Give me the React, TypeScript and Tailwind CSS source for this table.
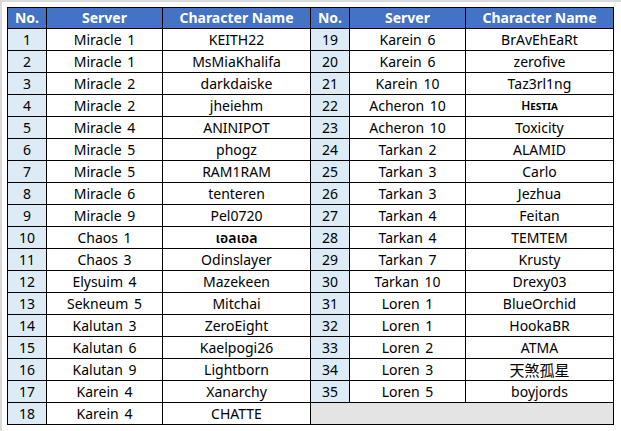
import React from "react";

const left: [string, string, React.ReactNode][] = [
  ["1", "Miracle 1", "KEITH22"],
  ["2", "Miracle 1", "MsMiaKhalifa"],
  ["3", "Miracle 2", "darkdaiske"],
  ["4", "Miracle 2", "jheiehm"],
  ["5", "Miracle 4", "ANINIPOT"],
  ["6", "Miracle 5", "phogz"],
  ["7", "Miracle 5", "RAM1RAM"],
  ["8", "Miracle 6", "tenteren"],
  ["9", "Miracle 9", "Pel0720"],
  ["10", "Chaos 1", <span className="font-semibold">เอลเอล</span>],
  ["11", "Chaos 3", "Odinslayer"],
  ["12", "Elysuim 4", "Mazekeen"],
  ["13", "Sekneum 5", "Mitchai"],
  ["14", "Kalutan 3", "ZeroEight"],
  ["15", "Kalutan 6", "Kaelpogi26"],
  ["16", "Kalutan 9", "Lightborn"],
  ["17", "Karein 4", "Xanarchy"],
  ["18", "Karein 4", "CHATTE"],
];

const right: [string, string, React.ReactNode][] = [
  ["19", "Karein 6", "BrAvEhEaRt"],
  ["20", "Karein 6", "zerofive"],
  ["21", "Karein 10", "Taz3rl1ng"],
  ["22", "Acheron 10", <span className="text-[12px] font-semibold [font-variant:small-caps]">Hestia</span>],
  ["23", "Acheron 10", "Toxicity"],
  ["24", "Tarkan 2", "ALAMID"],
  ["25", "Tarkan 3", "Carlo"],
  ["26", "Tarkan 3", "Jezhua"],
  ["27", "Tarkan 4", "Feitan"],
  ["28", "Tarkan 4", "TEMTEM"],
  ["29", "Tarkan 7", "Krusty"],
  ["30", "Tarkan 10", "Drexy03"],
  ["31", "Loren 1", "BlueOrchid"],
  ["32", "Loren 1", "HookaBR"],
  ["33", "Loren 2", "ATMA"],
  ["34", "Loren 3", <span className="text-[15px]">天煞孤星</span>],
  ["35", "Loren 5", "boyjords"],
];

const Head = ({ children }: { children: React.ReactNode }) => (
  <div className="bg-[#4472c4] text-white font-bold flex items-center justify-center">{children}</div>
);

const No = ({ children }: { children: React.ReactNode }) => (
  <div className="bg-[#ddebf7] flex items-center justify-center pt-px">{children}</div>
);

const Cell = ({ children, server }: { children: React.ReactNode; server?: boolean }) => (
  <div
    className={
      server
        ? "bg-white flex items-center justify-center whitespace-pre pt-px [word-spacing:2px]"
        : "bg-white flex items-center justify-center whitespace-pre pt-px"
    }
  >
    {children}
  </div>
);

export default function App() {
  const rows: React.ReactNode[] = [];
  for (let i = 0; i < 18; i++) {
    const l = left[i];
    rows.push(
      <React.Fragment key={"l" + i}>
        <No>{l[0]}</No>
        <Cell server>{l[1]}</Cell>
        <Cell>{l[2]}</Cell>
      </React.Fragment>
    );
    const r = right[i];
    if (r) {
      rows.push(
        <React.Fragment key={"r" + i}>
          <No>{r[0]}</No>
          <Cell server>{r[1]}</Cell>
          <Cell>{r[2]}</Cell>
        </React.Fragment>
      );
    } else {
      rows.push(<div key="empty" className="col-span-3 bg-[#e4e4e4]" />);
    }
  }
  return (
    <div className="w-[621px] h-[431px] bg-white border-t-2 border-l-2 border-[#d9d9d9] pt-[5px] pl-[5px]">
      <div
        className="grid w-[607px] gap-px bg-black p-px grid-cols-[38px_115px_147px_38px_115px_147px] grid-rows-[20px_repeat(18,21px)] text-[14px] leading-none text-black"
        style={{ fontFamily: '"Noto Sans", "Noto Sans Thai", "Noto Sans CJK KR", sans-serif' }}
      >
        <Head>No.</Head>
        <Head>Server</Head>
        <Head>Character Name</Head>
        <Head>No.</Head>
        <Head>Server</Head>
        <Head>Character Name</Head>
        {rows}
      </div>
    </div>
  );
}
